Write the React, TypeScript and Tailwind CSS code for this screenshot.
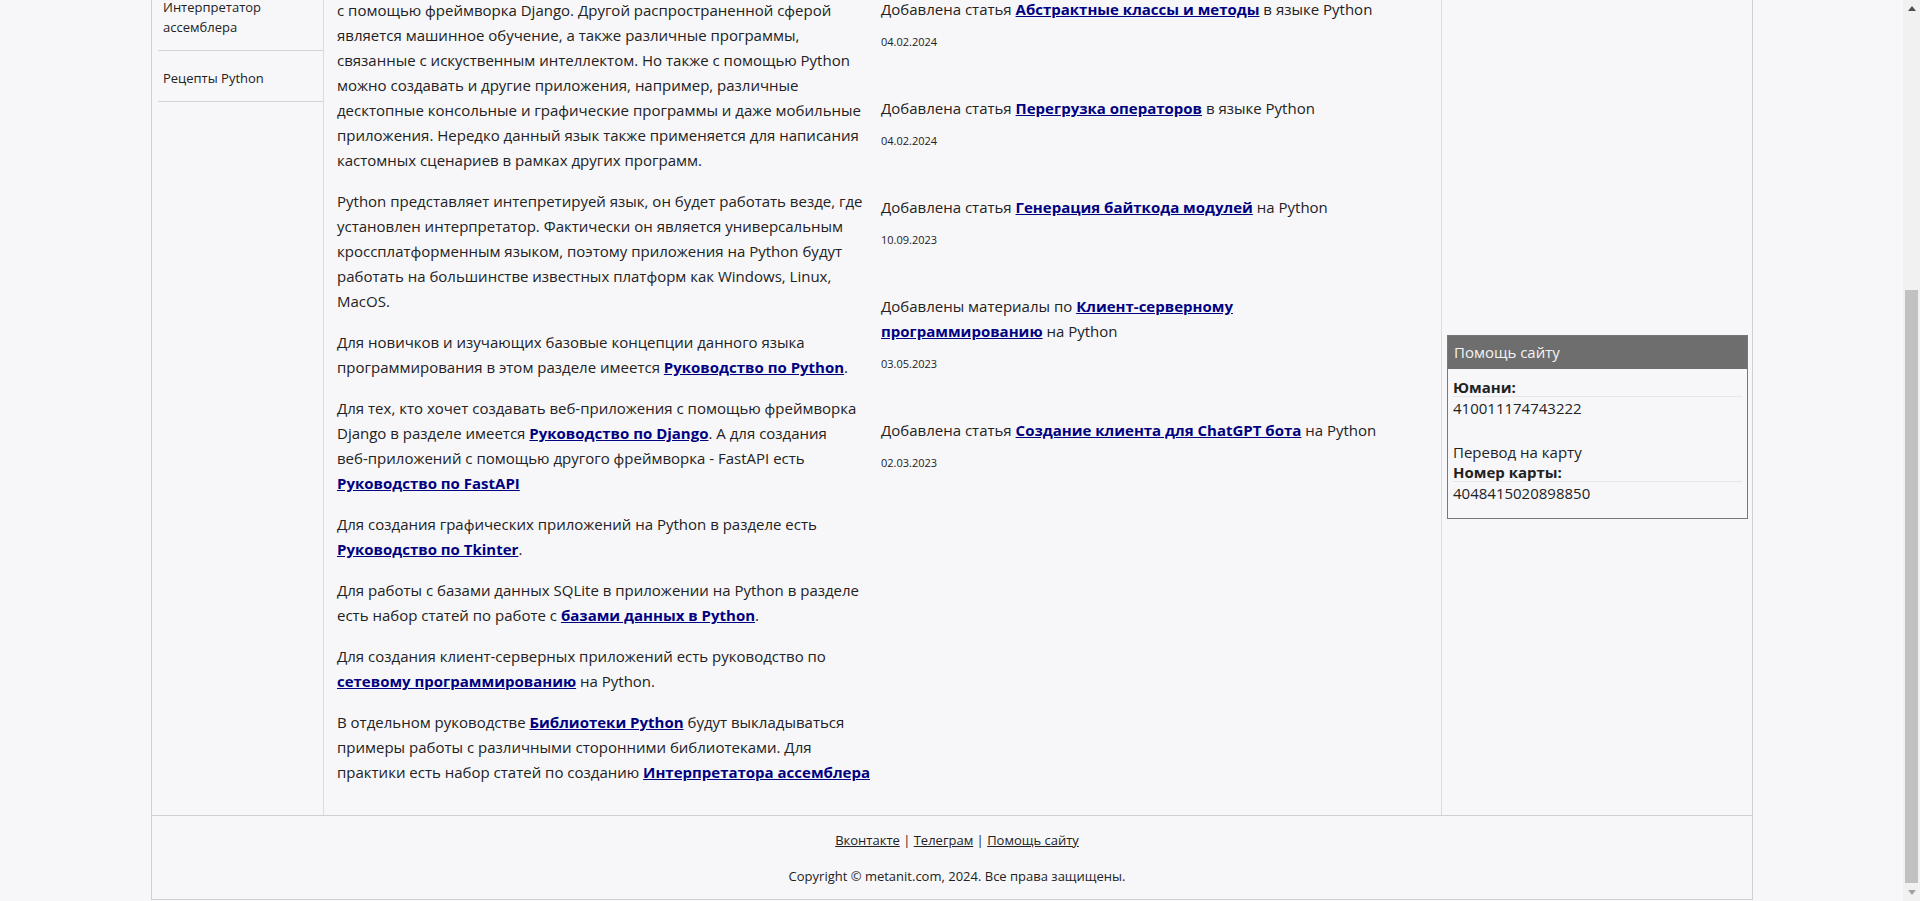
import React from "react";

const font = { fontFamily: '"Segoe UI", "Open Sans", "Noto Sans", sans-serif' };

type News = { lines: React.ReactNode; date: string };

function L({ children }: { children: React.ReactNode }) {
  return <a className="font-bold text-[#000080] underline">{children}</a>;
}

const news: News[] = [
  {
    lines: (
      <>
        Добавлена статья <L>Абстрактные классы и методы</L> в языке Python
      </>
    ),
    date: "04.02.2024",
  },
  {
    lines: (
      <>
        Добавлена статья <L>Перегрузка операторов</L> в языке Python
      </>
    ),
    date: "04.02.2024",
  },
  {
    lines: (
      <>
        Добавлена статья <L>Генерация байткода модулей</L> на Python
      </>
    ),
    date: "10.09.2023",
  },
  {
    lines: (
      <>
        Добавлены материалы по{" "}
        <L>
          Клиент-серверному
          <br />
          программированию
        </L>{" "}
        на Python
      </>
    ),
    date: "03.05.2023",
  },
  {
    lines: (
      <>
        Добавлена статья <L>Создание клиента для ChatGPT бота</L> на Python
      </>
    ),
    date: "02.03.2023",
  },
];

function Scrollbar() {
  return (
    <div className="flex w-[17px] shrink-0 flex-col bg-[#f1f1f1]">
      <div className="flex h-[17px] items-center justify-center">
        <svg width="8" height="5" viewBox="0 0 8 5">
          <path d="M4 0 L8 5 L0 5 Z" fill="#505050" />
        </svg>
      </div>
      <div className="h-[273px]" />
      <div className="mx-[2px] h-[593px] bg-[#c1c1c1]" />
      <div className="flex-1" />
      <div className="flex h-[17px] items-center justify-center">
        <svg width="8" height="5" viewBox="0 0 8 5">
          <path d="M0 0 L8 0 L4 5 Z" fill="#a3a3a3" />
        </svg>
      </div>
    </div>
  );
}

export default function App() {
  return (
    <div className="flex h-[901px] overflow-hidden bg-[#f7f7fa] text-[#222]" style={font}>
      <div className="flex-1 overflow-hidden">
        <div className="-mt-[40px] ml-[151px] w-[1602px] border-x border-[#cfcfcf]">
          <div className="flex h-[855px]">
            {/* sidebar */}
            <aside className="w-[172px] shrink-0 border-r border-[#dcdcdc] pl-[6px] pt-[19px] text-[13px] leading-[20px]">
              <ul>
                <li className="border-y border-[#d4d4d4] pl-[5px] pt-[17px] pb-[13px]">
                  Интерпретатор
                  <br />
                  ассемблера
                </li>
                <li className="border-b border-[#d4d4d4] pl-[5px] pt-[17px] pb-[13px]">Рецепты Python</li>
              </ul>
            </aside>

            {/* main */}
            <main className="flex flex-1 border-r border-[#dcdcdc]">
              <article className="w-[544px] shrink-0 whitespace-nowrap pl-[13px] pt-[38px] text-[15px] leading-[25px] [&>p]:mb-[16px]">
                <p>
                  с помощью фреймворка Django. Другой распространенной сферой
                  <br />
                  является машинное обучение, а также различные программы,
                  <br />
                  связанные с искуственным интеллектом. Но также с помощью Python
                  <br />
                  можно создавать и другие приложения, например, различные
                  <br />
                  десктопные консольные и графические программы и даже мобильные
                  <br />
                  приложения. Нередко данный язык также применяется для написания
                  <br />
                  кастомных сценариев в рамках других программ.
                </p>
                <p>
                  Python представляет интепретируей язык, он будет работать везде, где
                  <br />
                  установлен интерпретатор. Фактически он является универсальным
                  <br />
                  кроссплатформенным языком, поэтому приложения на Python будут
                  <br />
                  работать на большинстве известных платформ как Windows, Linux,
                  <br />
                  MacOS.
                </p>
                <p>
                  Для новичков и изучающих базовые концепции данного языка
                  <br />
                  программирования в этом разделе имеется <L>Руководство по Python</L>.
                </p>
                <p>
                  Для тех, кто хочет создавать веб-приложения с помощью фреймворка
                  <br />
                  Django в разделе имеется <L>Руководство по Django</L>. А для создания
                  <br />
                  веб-приложений с помощью другого фреймворка - FastAPI есть
                  <br />
                  <L>Руководство по FastAPI</L>
                </p>
                <p>
                  Для создания графических приложений на Python в разделе есть
                  <br />
                  <L>Руководство по Tkinter</L>.
                </p>
                <p>
                  Для работы с базами данных SQLite в приложении на Python в разделе
                  <br />
                  есть набор статей по работе с <L>базами данных в Python</L>.
                </p>
                <p>
                  Для создания клиент-серверных приложений есть руководство по
                  <br />
                  <L>сетевому программированию</L> на Python.
                </p>
                <p>
                  В отдельном руководстве <L>Библиотеки Python</L> будут выкладываться
                  <br />
                  примеры работы с различными сторонними библиотеками. Для
                  <br />
                  практики есть набор статей по созданию <L>Интерпретатора ассемблера</L>
                </p>
              </article>

              <section className="flex-1 pl-[13px] pt-[37px]">
                {news.map((n, i) => (
                  <div key={i} className="mb-[46px]">
                    <p className="text-[15px] leading-[25px]">{n.lines}</p>
                    <p className="mt-[12px] text-[11px] leading-[16px]">{n.date}</p>
                  </div>
                ))}
              </section>
            </main>

            {/* right column */}
            <aside className="w-[310px] shrink-0 pl-[5px] pt-[375px]">
              <div className="w-[301px] border border-[#777]">
                <div className="flex h-[33px] items-center bg-[#6e6e6e] pl-[6px] text-[15px] text-[#f4f4f4]">
                  Помощь сайту
                </div>
                <div className="px-[5px] pt-[9px] pb-[14px] text-[15px] leading-[22px]">
                  <div className="border-b border-[#e6e6ea] font-bold leading-[18px]">Юмани:</div>
                  <div>410011174743222</div>
                  <br />
                  <div>Перевод на карту</div>
                  <div className="border-b border-[#e6e6ea] font-bold leading-[18px]">Номер карты:</div>
                  <div>4048415020898850</div>
                </div>
              </div>
            </aside>
          </div>

          <footer className="border-y border-[#cfcfcf] pb-[15px] pl-[10px] pt-[16px] text-center text-[13px] leading-[16px]">
            <p>
              <a className="underline">Вконтакте</a> | <a className="underline">Телеграм</a> |{" "}
              <a className="underline">Помощь сайту</a>
            </p>
            <p className="mt-[20px]">Copyright © metanit.com, 2024. Все права защищены.</p>
          </footer>
        </div>
      </div>
      <Scrollbar />
    </div>
  );
}
